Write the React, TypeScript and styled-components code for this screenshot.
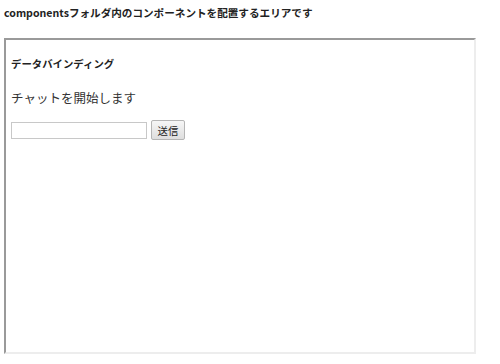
import React from "react";
import styled, { createGlobalStyle } from "styled-components";

const Global = createGlobalStyle`
  html, body { margin: 0; padding: 0; background: #fff; }
  body { font-family: "Noto Sans CJK JP", "Noto Sans", sans-serif; color: #222; }
`;

const Page = styled.div`
  padding: 6px 0 0 4px;
  display: flex;
  flex-direction: column;
`;

const Heading = styled.h1`
  margin: 0;
  font-size: 10.6px;
  line-height: 14px;
  font-weight: 700;
  color: #222;
`;

const Frame = styled.div`
  margin-top: 18px;
  width: 472px;
  height: 316px;
  box-sizing: border-box;
  border: 2px solid;
  border-color: #9a9a9a #ededed #ededed #9a9a9a;
  padding: 17px 5px 0 5px;
  display: flex;
  flex-direction: column;
`;

const Title = styled.h2`
  margin: 0;
  font-size: 10.4px;
  line-height: 14px;
  font-weight: 700;
  color: #222;
`;

const Message = styled.p`
  margin: 19px 0 0 0;
  font-size: 12.5px;
  line-height: 16px;
  font-weight: 400;
  color: #333;
`;

const Row = styled.div`
  margin-top: 14px;
  display: flex;
  align-items: center;
  gap: 4px;
`;

const TextInput = styled.input`
  box-sizing: border-box;
  width: 136px;
  height: 17px;
  border: 1px solid #c8c8c8;
  padding: 0 3px;
  margin: 0;
  font-size: 10px;
  outline: none;
`;

const Button = styled.button`
  box-sizing: border-box;
  width: 34px;
  height: 20px;
  margin: 0;
  padding: 0;
  border: 1px solid #b5b5b5;
  border-radius: 2px;
  background: linear-gradient(#f6f6f6, #dedede);
  font-family: "Noto Sans CJK JP", sans-serif;
  font-size: 10.4px;
  color: #222;
`;

export default function App() {
  return (
    <>
      <Global />
      <Page>
        <Heading>componentsフォルダ内のコンポーネントを配置するエリアです</Heading>
        <Frame>
          <Title>データバインディング</Title>
          <Message>チャットを開始します</Message>
          <Row>
            <TextInput type="text" />
            <Button>送信</Button>
          </Row>
        </Frame>
      </Page>
    </>
  );
}
